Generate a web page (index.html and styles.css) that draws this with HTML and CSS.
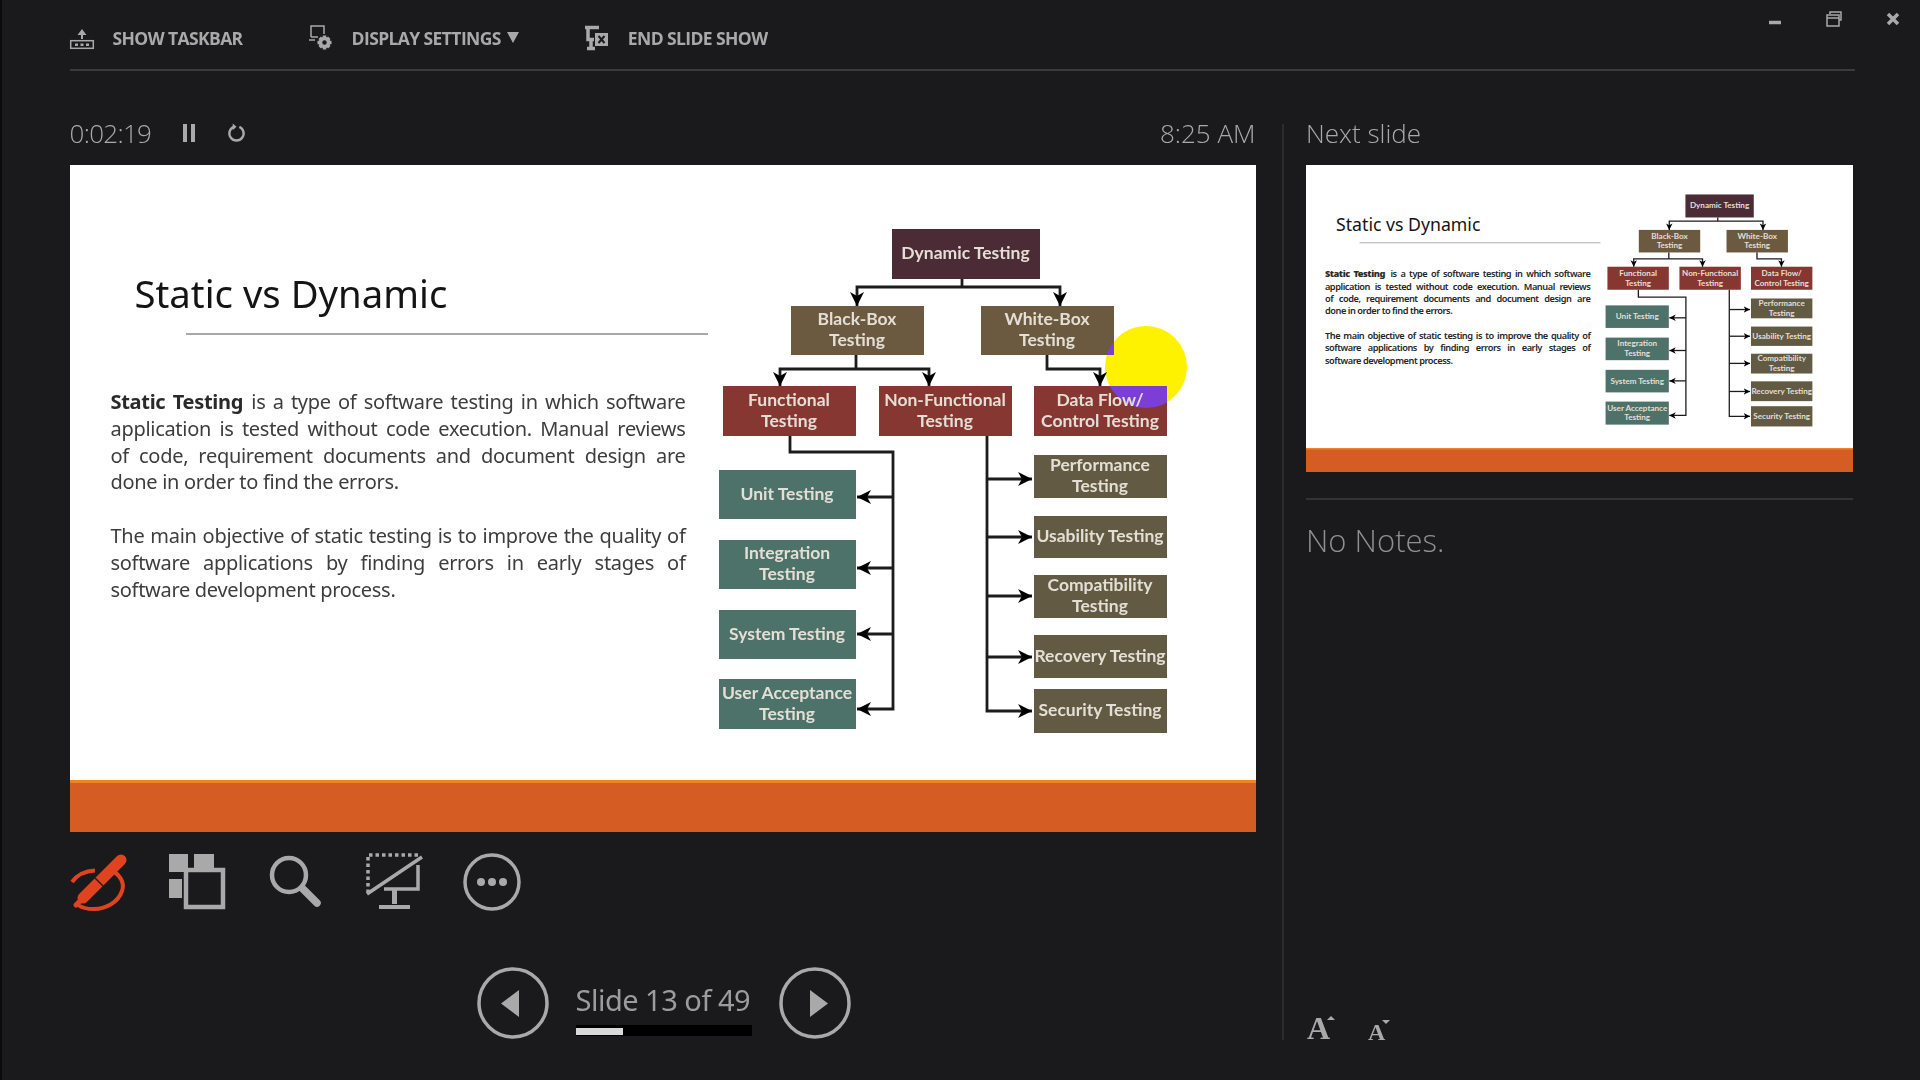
FILE: index.html
```html
<!DOCTYPE html>
<html lang="en">
<head>
  <meta charset="UTF-8">
  <title>Presenter View</title>
  <link rel="stylesheet" href="styles.css">
</head>
<body>
  <div class="app">

    <header class="topbar">
      <a class="topbtn">
        <svg class="topicon" viewBox="0 0 24 24"><path class="fill" d="M12 3 7.500 9H11v4h2V9h3.500z"/><rect class="line" x=".7" y="14.700" width="22.600" height="7.600"/><path class="fill" d="M5 17.500h3V20H5zM10.500 17.500h3V20h-3zM16 17.500h3V20h-3z"/></svg>
        SHOW TASKBAR
      </a>
      <a class="topbtn">
        <svg class="topicon" viewBox="0 0 24 24"><path class="line" d="M2 11V0h13v8M9 11H2M6 14H0"/><circle class="line thick" cx="15.500" cy="16.500" r="4"/><path class="line thick" d="M15.500 9.500v3M15.500 20.500v3M8.500 16.500h3M19.500 16.500h3M10.700 11.700l2 2M18.300 19.300l2 2M10.700 21.300l2-2M18.300 13.700l2-2"/></svg>
        DISPLAY SETTINGS <span class="caret"></span>
      </a>
      <a class="topbtn">
        <svg class="topicon" viewBox="0 0 24 24"><path class="line thick" d="M0 1.500h14M3 1.500v12h6M6 13.500V21M2 22.500h8"/><rect class="fill" x="10" y="7" width="13" height="13"/><path class="cut" d="m13.500 10 6 7M19.500 10l-6 7"/></svg>
        END SLIDE SHOW
      </a>
      <div class="winbtns">
        <svg class="winicon" viewBox="0 0 16 16"><path class="line thick" d="M2 11.500h12"/></svg>
        <svg class="winicon" viewBox="0 0 16 16"><path class="line" d="M4 3V1h11v8h-2"/><rect class="line" x="1" y="4" width="12" height="11"/><path class="line" d="M1 7h12"/></svg>
        <svg class="winicon" viewBox="0 0 16 16"><path class="line heavy" d="m3 3 10 10M13 3 3 13"/></svg>
      </div>
    </header>

    <div class="columns">

      <main class="presenter">
        <div class="meta">
          <div class="timer">
            <span>0:02:19</span>
            <svg class="pause" viewBox="0 0 14 20"><path class="fill" d="M1 1h4v18H1zM9 1h4v18H9z"/></svg>
            <svg class="reset" viewBox="0 0 20 20"><path class="line mid" d="M7 3.500a7.500 7.500 0 1 0 6 0"/><path class="fill" d="M6 0v7l4-3.500z"/></svg>
          </div>
          <span class="clock">8:25 AM</span>
        </div>

        <section class="slide">
          <div class="slide-body">
            <div class="slide-text">
              <h2 class="slide-title">Static vs Dynamic</h2>
              <div class="title-rule"></div>
              <p>
                <span class="jl"><b>Static Testing</b> is a type of software testing in which software</span>
                <span class="jl">application is tested without code execution. Manual reviews</span>
                <span class="jl">of code, requirement documents and document design are</span>
                <span class="ll">done in order to find the errors.</span>
              </p>
              <p>
                <span class="jl">The main objective of static testing is to improve the quality of</span>
                <span class="jl">software applications by finding errors in early stages of</span>
                <span class="ll">software development process.</span>
              </p>
            </div>
            <div class="diagram">
              <div class="pointer"></div>
              <div class="node dark n-dynamic">Dynamic Testing</div>
              <div class="node brown n-black">Black-Box<br>Testing</div>
              <div class="node brown n-white"><i class="spot spot-white"></i><span>White-Box<br>Testing</span></div>
              <div class="node red n-functional">Functional<br>Testing</div>
              <div class="node red n-nonfunc">Non-Functional<br>Testing</div>
              <div class="node red n-data"><i class="spot spot-data"></i><span>Data Flow/<br>Control Testing</span></div>
              <div class="node teal n-unit">Unit Testing</div>
              <div class="node teal n-integration">Integration<br>Testing</div>
              <div class="node teal n-system">System Testing</div>
              <div class="node teal n-user">User Acceptance<br>Testing</div>
              <div class="node olive n-perf">Performance<br>Testing</div>
              <div class="node olive n-usab">Usability Testing</div>
              <div class="node olive n-compat">Compatibility<br>Testing</div>
              <div class="node olive n-recov">Recovery Testing</div>
              <div class="node olive n-secur">Security Testing</div>
              <svg class="links" viewBox="0 0 449 504">
                <defs>
                  <marker id="head" markerUnits="userSpaceOnUse" markerWidth="18" markerHeight="18" refX="14" refY="9" orient="auto"><path d="M0 2 14 9 0 16 4 9z"/></marker>
                </defs>
                <path d="M243 50v8"/>
                <path d="M243 58H138v19" marker-end="url(#head)"/>
                <path d="M243 58h98v19" marker-end="url(#head)"/>
                <path d="M137 126v14"/>
                <path d="M137 140H61v17" marker-end="url(#head)"/>
                <path d="M137 140h73v17" marker-end="url(#head)"/>
                <path d="M328 126v14h53v17" marker-end="url(#head)"/>
                <path d="M71 207v16h103v257h-36" marker-end="url(#head)"/>
                <path d="M174 268h-36" marker-end="url(#head)"/>
                <path d="M174 339h-36" marker-end="url(#head)"/>
                <path d="M174 405h-36" marker-end="url(#head)"/>
                <path d="M268 207v275h45" marker-end="url(#head)"/>
                <path d="M268 250h45" marker-end="url(#head)"/>
                <path d="M268 308h45" marker-end="url(#head)"/>
                <path d="M268 367h45" marker-end="url(#head)"/>
                <path d="M268 428h45" marker-end="url(#head)"/>
              </svg>
            </div>
          </div>
          <div class="slide-foot"></div>
        </section>

        <div class="tools">
          <svg class="tool" viewBox="0 0 60 60"><path class="pen-swoop" d="M2 31C7 24 15 20 25 19.500M39 19C50 22 55 32 52 40 48 52 35 58 24 58 18 58 12 57 8 54"/><path class="pen-body" d="M51 9 13 47"/><path class="pen-nib" d="m13 47-7 7"/><path class="pen-band" d="m25 27 8 8"/></svg>
          <svg class="tool" viewBox="0 0 60 60"><path class="fill" d="M0 3h19v14h-4v4H0zM25 3h20v14H25zM0 28h13v19H0z"/><rect class="line wide" x="17" y="19" width="37" height="37"/></svg>
          <svg class="tool" viewBox="0 0 60 60"><circle class="line wide" cx="21" cy="24" r="17"/><path class="handle" d="m35 38 14 14"/></svg>
          <svg class="tool" viewBox="0 0 60 60"><path class="line dots" d="M1 42V4h52"/><path class="line thick" d="m0 43 55-37M51 14v24H17"/><path class="fill" d="M25 38h5v15h-5zM12 54h31v4H12z"/></svg>
          <svg class="tool" viewBox="0 0 60 60"><circle class="line thick" cx="26" cy="31" r="27"/><circle class="fill" cx="15" cy="31" r="4"/><circle class="fill" cx="26" cy="31" r="4"/><circle class="fill" cx="37" cy="31" r="4"/></svg>
        </div>

        <div class="pager">
          <svg class="navbtn" viewBox="0 0 72 72"><circle class="line thick" cx="36" cy="36" r="34"/><path class="fill" d="M42 23v27L24 36.500z"/></svg>
          <div class="pager-mid">
            <span class="pager-label">Slide 13 of 49</span>
            <div class="progress"><div class="progress-fill"></div></div>
          </div>
          <svg class="navbtn" viewBox="0 0 72 72"><circle class="line thick" cx="36" cy="36" r="34"/><path class="fill" d="M31 23v27l18-13.500z"/></svg>
        </div>
      </main>

      <aside class="side">
        <div class="side-head">Next slide</div>
        <div class="thumb">
          <section class="slide">
            <div class="slide-body">
              <div class="slide-text">
                <h2 class="slide-title">Static vs Dynamic</h2>
                <div class="title-rule"></div>
                <p>
                  <span class="jl"><b>Static Testing</b> is a type of software testing in which software</span>
                  <span class="jl">application is tested without code execution. Manual reviews</span>
                  <span class="jl">of code, requirement documents and document design are</span>
                  <span class="ll">done in order to find the errors.</span>
                </p>
                <p>
                  <span class="jl">The main objective of static testing is to improve the quality of</span>
                  <span class="jl">software applications by finding errors in early stages of</span>
                  <span class="ll">software development process.</span>
                </p>
              </div>
              <div class="diagram">
                <div class="node dark n-dynamic">Dynamic Testing</div>
                <div class="node brown n-black">Black-Box<br>Testing</div>
                <div class="node brown n-white">White-Box<br>Testing</div>
                <div class="node red n-functional">Functional<br>Testing</div>
                <div class="node red n-nonfunc">Non-Functional<br>Testing</div>
                <div class="node red n-data">Data Flow/<br>Control Testing</div>
                <div class="node teal n-unit">Unit Testing</div>
                <div class="node teal n-integration">Integration<br>Testing</div>
                <div class="node teal n-system">System Testing</div>
                <div class="node teal n-user">User Acceptance<br>Testing</div>
                <div class="node olive n-perf">Performance<br>Testing</div>
                <div class="node olive n-usab">Usability Testing</div>
                <div class="node olive n-compat">Compatibility<br>Testing</div>
                <div class="node olive n-recov">Recovery Testing</div>
                <div class="node olive n-secur">Security Testing</div>
                <svg class="links" viewBox="0 0 449 504">
                  <path d="M243 50v8"/>
                  <path d="M243 58H138v19" marker-end="url(#head)"/>
                  <path d="M243 58h98v19" marker-end="url(#head)"/>
                  <path d="M137 126v14"/>
                  <path d="M137 140H61v17" marker-end="url(#head)"/>
                  <path d="M137 140h73v17" marker-end="url(#head)"/>
                  <path d="M328 126v14h53v17" marker-end="url(#head)"/>
                  <path d="M71 207v16h103v257h-36" marker-end="url(#head)"/>
                  <path d="M174 268h-36" marker-end="url(#head)"/>
                  <path d="M174 339h-36" marker-end="url(#head)"/>
                  <path d="M174 405h-36" marker-end="url(#head)"/>
                  <path d="M268 207v275h45" marker-end="url(#head)"/>
                  <path d="M268 250h45" marker-end="url(#head)"/>
                  <path d="M268 308h45" marker-end="url(#head)"/>
                  <path d="M268 367h45" marker-end="url(#head)"/>
                  <path d="M268 428h45" marker-end="url(#head)"/>
                </svg>
              </div>
            </div>
            <div class="slide-foot"></div>
          </section>
        </div>
        <div class="notes">No Notes.</div>
        <div class="fontbtns">
          <span class="fontbtn big">A<i class="tri tri-up"></i></span>
          <span class="fontbtn small">A<i class="tri tri-down"></i></span>
        </div>
      </aside>

    </div>
  </div>
</body>
</html>
```

FILE: styles.css
```css
* {
  box-sizing: border-box;
  margin: 0;
  padding: 0;
}

body {
  width: 1920px;
  height: 1080px;
  overflow: hidden;
  background-color: #1a1a1c;
  border-left: 2px solid #0b0b0c;
  font-family: "Open Sans", "Noto Sans", sans-serif;
  color: #a9a9a9;
}

.app {
  height: 100%;
  padding: 0 65px 0 67.500px;
  filter: blur(0.5px);
}

/* svg helpers */
.fill {
  fill: #a9a9a9;
}

.line {
  fill: none;
  stroke: #a9a9a9;
  stroke-width: 1.5;
}

.mid {
  stroke-width: 2.5;
}

.thick {
  stroke-width: 3.5;
}

.wide {
  stroke-width: 4.5;
}

.heavy {
  stroke-width: 3.5;
}

.dots {
  stroke-width: 3.5;
  stroke-dasharray: 3.5 3;
}

.cut {
  fill: none;
  stroke: #1a1a1c;
  stroke-width: 2;
}

/* top bar */
.topbar {
  display: flex;
  align-items: center;
  height: 71px;
  padding-top: 6px;
  border-bottom: 2px solid #3b3b3d;
}

.topbtn {
  display: flex;
  align-items: center;
  margin-right: 66px;
  font-size: 17.500px;
  font-weight: 700;
  letter-spacing: -0.6px;
  white-space: nowrap;
}

.topicon {
  width: 24px;
  height: 24px;
  margin-right: 19px;
  overflow: visible;
}

.caret {
  display: inline-block;
  width: 0;
  height: 0;
  margin-left: 6px;
  border-left: 6px solid transparent;
  border-right: 6px solid transparent;
  border-top: 11px solid #a9a9a9;
}

.winbtns {
  display: flex;
  align-self: flex-start;
  gap: 43px;
  margin-left: auto;
  margin-right: -46px;
  padding-top: 5px;
}

.winicon {
  width: 16px;
  height: 16px;
}

/* columns */
.columns {
  display: flex;
  height: 916px;
  margin-top: 53px;
}

.presenter {
  flex: none;
  width: 1186px;
}

.meta {
  display: flex;
  align-items: center;
  justify-content: space-between;
  height: 41px;
  padding-bottom: 23px;
  font-size: 26px;
  font-weight: 300;
  letter-spacing: -0.7px;
}

.clock {
  letter-spacing: 0;
}

.timer {
  display: flex;
  align-items: center;
}

.pause {
  width: 14px;
  height: 20px;
  margin-left: 31px;
}

.reset {
  width: 19px;
  height: 20px;
  margin-left: 31px;
}

/* slide */
.slide {
  display: flex;
  flex-direction: column;
  flex: none;
  width: 1186px;
  height: 667px;
  background: #fff;
}

.slide-body {
  display: flex;
  height: 615px;
}

.slide-foot {
  height: 52px;
  background: #d55c23;
  border-top: 3px solid #f08527;
}

.slide-text {
  flex: none;
  width: 649px;
  padding: 0 33px 0 41px;
  color: #3d3d3d;
  font-family: "Noto Sans", "Open Sans", sans-serif;
  font-size: 20px;
  line-height: 26.800px;
}

.slide-title {
  margin: 103px 0 0 24px;
  height: 50px;
  font-size: 38.300px;
  line-height: 50px;
  font-weight: 400;
  color: #141414;
}

.title-rule {
  height: 2px;
  margin: 15px -22px 54px 75px;
  background: #a8a8a8;
}

.slide-text p {
  margin-bottom: 27px;
  letter-spacing: -0.3px;
}

.jl {
  display: block;
  text-align: justify;
  text-align-last: justify;
}

.ll {
  display: block;
}

.slide-text b {
  padding-right: 1px;
  color: #2a2a2a;
}

/* diagram */
.diagram {
  position: relative;
  flex: none;
  width: 449px;
  height: 504px;
  margin-top: 64px;
}

.links {
  position: absolute;
  top: 0;
  left: 0;
  width: 449px;
  height: 504px;
  overflow: visible;
}

.links path {
  fill: none;
  stroke: #1c1c1c;
  stroke-width: 2.800;
}

.links marker path {
  fill: #000;
  stroke: none;
}

.node {
  position: absolute;
  display: flex;
  align-items: center;
  justify-content: center;
  overflow: hidden;
  padding-bottom: 3px;
  color: #e4dfd6;
  font-family: Lato, "Open Sans", sans-serif;
  font-size: 17.500px;
  font-weight: 700;
  line-height: 21px;
  text-align: center;
  white-space: nowrap;
}

.node span {
  position: relative;
}

.dark {
  background: #4b2b35;
}

.brown {
  background: #6b5a3f;
}

.red {
  background: #873731;
}

.teal {
  background: #4d7269;
}

.olive {
  background: #625a42;
}

.n-dynamic { left: 173px; top: 0; width: 148px; height: 50px; }
.n-black { left: 72px; top: 77px; width: 133px; height: 49px; }
.n-white { left: 262px; top: 77px; width: 133px; height: 49px; }
.n-functional { left: 4px; top: 157px; width: 133px; height: 50px; }
.n-nonfunc { left: 160px; top: 157px; width: 133px; height: 50px; }
.n-data { left: 315px; top: 157px; width: 133px; height: 50px; }
.n-unit { left: 0; top: 241px; width: 137px; height: 49px; }
.n-integration { left: 0; top: 311px; width: 137px; height: 49px; }
.n-system { left: 0; top: 381px; width: 137px; height: 49px; }
.n-user { left: 0; top: 450px; width: 137px; height: 50px; }
.n-perf { left: 315px; top: 226px; width: 133px; height: 43px; }
.n-usab { left: 315px; top: 287px; width: 133px; height: 42px; }
.n-compat { left: 315px; top: 346px; width: 133px; height: 43px; }
.n-recov { left: 315px; top: 406px; width: 133px; height: 43px; }
.n-secur { left: 315px; top: 460px; width: 133px; height: 44px; }

/* laser pointer, purple where it sits over a box */
.pointer {
  position: absolute;
  left: 386px;
  top: 97px;
  width: 82px;
  height: 82px;
  border-radius: 50%;
  background: #fff200;
}

.spot {
  position: absolute;
  width: 82px;
  height: 82px;
  border-radius: 50%;
  background: #7b3fd6;
}

.spot-white {
  left: 124px;
  top: 20px;
}

.spot-data {
  left: 71px;
  top: -60px;
}

/* tools and pager */
.tools {
  display: flex;
  gap: 39px;
  margin-top: 19px;
}

.tool {
  flex: none;
  width: 60px;
  height: 60px;
  overflow: visible;
}

.pen-swoop {
  fill: none;
  stroke: #e0431f;
  stroke-width: 4;
}

.pen-body {
  stroke: #e0431f;
  stroke-width: 11;
  stroke-linecap: round;
}

.pen-nib {
  stroke: #e0431f;
  stroke-width: 5;
  stroke-linecap: round;
}

.pen-band {
  stroke: #1a1a1c;
  stroke-width: 1.5;
}

.handle {
  stroke: #a9a9a9;
  stroke-width: 7.500;
  stroke-linecap: round;
}

.pager {
  display: flex;
  align-items: flex-start;
  gap: 27px;
  margin: 56px 0 0 407px;
}

.navbtn {
  flex: none;
  width: 72px;
  height: 72px;
}

.pager-mid {
  width: 176px;
  padding-top: 13px;
}

.pager-label {
  display: block;
  font-family: "Noto Sans", sans-serif;
  font-size: 29px;
  line-height: 40px;
  letter-spacing: -0.5px;
  white-space: nowrap;
  color: #9c9c9c;
}

.progress {
  height: 11px;
  margin-top: 5px;
  padding: 3px 0 1px;
  background: #000;
}

.progress-fill {
  width: 47px;
  height: 7px;
  background: #d9d9d9;
}

/* right column */
.side {
  display: flex;
  flex-direction: column;
  flex: none;
  width: 571px;
  margin-left: 26.500px;
  padding-left: 22px;
  border-left: 2px solid #2c2c2e;
}

.side-head {
  display: flex;
  align-items: center;
  height: 41px;
  padding-bottom: 23px;
  font-size: 26px;
  font-weight: 300;
  letter-spacing: 0;
}

.thumb {
  flex: none;
  width: 547px;
  height: 307px;
  overflow: hidden;
  background: #fff;
}

.thumb .slide {
  transform: scale(0.4616, 0.4603);
  transform-origin: 0 0;
}

.thumb .slide-text p {
  font-weight: 600;
  color: #262626;
  letter-spacing: -1px;
}

.thumb .slide-text b {
  padding-right: 4px;
}

.notes {
  margin-top: 26px;
  padding-top: 18px;
  border-top: 2px solid #333335;
  font-size: 31px;
  line-height: 44px;
  font-weight: 300;
  color: #8f8f8f;
}

.fontbtns {
  display: flex;
  align-items: flex-end;
  gap: 38px;
  margin-top: auto;
  margin-bottom: -4px;
  padding-left: 1px;
  font-family: "Liberation Serif", serif;
  font-weight: 700;
}

.fontbtn {
  position: relative;
  line-height: 1;
}

.big {
  font-size: 32px;
}

.small {
  font-size: 24px;
}

.tri {
  position: absolute;
  right: -5px;
  width: 0;
  height: 0;
  border-left: 4px solid transparent;
  border-right: 4px solid transparent;
}

.tri-up {
  top: 4px;
  border-bottom: 4px solid #a9a9a9;
}

.tri-down {
  top: 0;
  border-top: 4px solid #a9a9a9;
}
```
